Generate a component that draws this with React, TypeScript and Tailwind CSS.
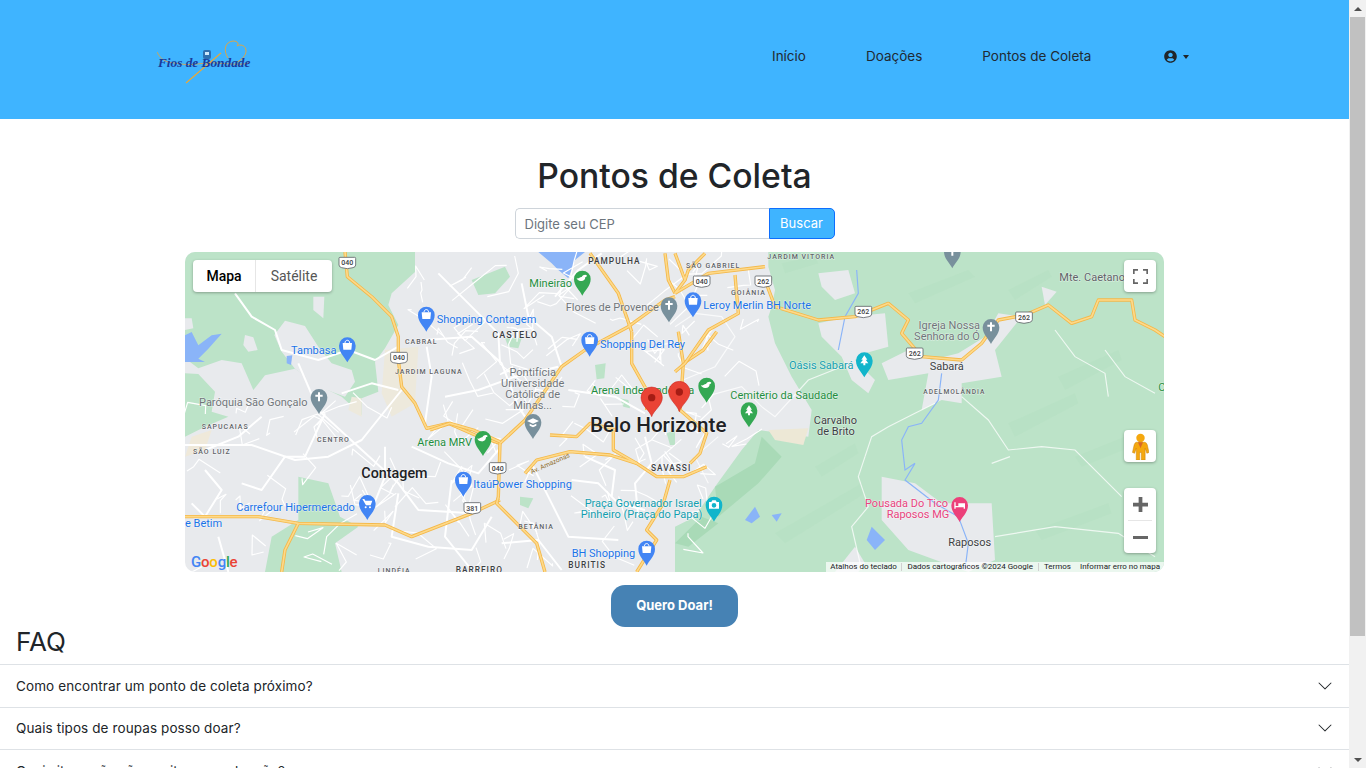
import { FaUserCircle } from "react-icons/fa";

// Map drawing is authored in 3x units: the left half runs x 0-1470, the right half is shifted by 1470
const GREEN = "#bce3c8";
const DARK_GREEN = "#a9dab7";
const URBAN = "#e8eaed";

const LEFT_GREENS = [
  "0,6 690,6 690,66 620,130 610,165 640,225 600,295 570,335 580,425 530,445 530,495 470,440 400,406 330,356 240,376 205,420 170,340 110,330 40,355 0,325",
  "860,90 960,50 975,80 930,130 880,135",
  "0,370 40,372 90,425 80,485 130,500 60,530 0,560",
  "340,680 430,700 465,800 520,830 450,880 470,966 240,966 260,860 340,810",
  "1230,345 1262,340 1258,385 1235,388",
  "1005,740 1045,745 1030,775 1005,765",
  "960,265 1010,265 1000,295 970,290",
  "1305,445 1330,450 1335,475 1315,470",
  "1445,550 1470,540 1470,585 1455,585",
];

// gray cut out of the big green around Tambasa
const LEFT_GRAY = [
  "300,212 360,228 400,290 440,340 500,360 510,395 480,440 400,410 330,356 290,305 268,255",
  "180,255 205,262 218,300 190,305 175,285",
  "385,140 418,140 415,205 385,180",
  "0,205 20,205 25,235 0,240",
];

const RIGHT_GREEN =
  "280,6 1470,6 1470,966 0,966 0,830 60,800 120,710 200,600 250,540 400,560 410,480 350,380 300,280 280,200 290,170 300,120 280,50";

const RIGHT_URBAN = [
  "430,70 520,60 540,130 480,150 440,110",
  "430,220 520,200 630,190 640,290 570,310 540,330 600,390 580,430 530,390 500,320 440,260",
  "620,340 700,300 770,330 850,310 930,260 970,190 1040,200 960,300 980,380 860,400 860,460 800,450 740,480 760,370 640,390",
  "620,680 720,700 800,760 950,760 960,930 880,966 700,900 620,810",
  "480,966 540,890 570,940 550,966",
  "1100,110 1145,125 1110,165",
];

const DEEP_GREEN = ["120,710 240,640 260,560 320,620 250,700 130,800", "0,880 80,800 130,820 40,890"];

// faint relief on the hills
const RELIEF = [
  "700,130 880,60 900,80 720,160",
  "1000,120 1120,60 1130,80 1020,150",
  "1150,380 1330,300 1340,330 1170,420",
  "1000,520 1200,430 1210,460 1020,560",
  "300,850 560,700 570,730 330,880",
  "1080,840 1300,760 1310,790 1100,870",
  "420,650 540,580 550,610 440,680",
  "320,40 420,20 430,40 330,70",
  "1200,620 1400,540 1420,570 1220,650",
];

const WHITE_LEFT = [
  "150,130 200,200 270,240 290,300 400,330 490,300 570,330 640,290",
  "340,340 400,480 520,590 640,700 700,780 860,790",
  "0,585 200,585 330,630 430,620 530,570 650,420",
  "420,490 360,620 300,620 230,720 170,700",
  "470,430 560,400 640,420",
  "725,290 740,380 720,520",
  "720,270 860,260 950,340 1000,470 1020,500",
  "780,440 880,420 990,380 1120,350",
  "600,590 600,680 560,780",
  "680,590 790,640 880,670 940,600",
  "800,690 780,860 860,960",
  "640,730 620,860 730,890 860,900 920,800",
  "1010,100 1030,200 1100,260 1130,350",
  "760,70 850,160 940,250 945,340",
  "1150,420 1290,440 1380,490",
  "1040,640 1100,760 1150,860 1300,870",
  "1160,690 1240,700 1300,760 1380,780",
  "950,880 1060,870 1130,960",
  "60,660 110,720 60,800 20,760",
  "100,860 130,966",
  "1250,10 1180,60 1110,140",
  "1380,560 1400,640 1350,700 1360,800",
  "1200,620 1290,660 1280,740",
  "230,500 160,560 60,600",
];

const WHITE_RIGHT = [
  "0,230 60,190 140,200 180,260 120,350 0,400",
  "90,440 200,410 260,470 300,500 400,390 500,350",
  "130,560 60,620 100,700",
  "570,620 590,560 640,530 720,490 780,460",
  "570,620 550,680 580,770 530,830 560,960",
  "860,440 940,510 1000,600 1100,590 1200,600 1340,740",
  "950,640 1005,620",
  "960,860 1140,830 1330,850 1440,920",
  "1140,240 1200,320 1290,370 1300,440",
  "1290,300 1350,380 1440,430",
];

const YELLOW_LEFT = [
  "480,6 487,80 560,140 620,200 640,260 640,330 650,410 690,460 725,535 790,520 870,555 945,580",
  "945,580 1020,510 1130,350 1200,300 1330,230 1440,150 1470,140",
  "945,750 860,790 680,860 600,825 340,820 220,800 0,800",
  "340,820 300,900 290,966",
  "1215,10 1300,130 1340,245",
  "1440,10 1450,90 1470,130",
];

// central Belo Horizonte, offset by 735,240
const YELLOW_CENTER = [
  "0,300 60,280 130,300 210,335",
  "210,340 205,500 200,520 320,640 345,726",
  "285,430 320,390 420,365 540,375 620,400 680,440 760,440 830,410",
  "720,450 700,520 650,600 680,630 620,726",
  "360,315 440,320 480,280 560,300",
  "550,300 550,360 620,400",
  "605,5 605,100 650,180 650,240",
  "745,5 760,100 750,240 830,310 810,370 780,400",
  "860,5 820,60 760,100",
];

const YELLOW_RIGHT = [
  "0,130 100,70 270,50",
  "180,75 190,190 100,240 30,340 0,365",
  "270,90 300,170 430,210 540,200 640,160 700,210 680,250 740,320 860,330 920,280 970,210 1050,195 1120,165 1190,220 1250,200 1270,150 1370,150 1380,210 1440,240 1470,260",
  "0,10 30,90 0,130",
  "90,10 40,60 30,90",
];

const RIVERS = [
  "545,60 550,130 510,200 490,300",
  "800,370 790,450 740,520 700,530 680,570 690,660 720,640 690,690 780,760 850,800 880,880 870,960",
];

const WATER = [
  "1060,6 1200,6 1170,30 1150,85 1120,60 1100,40",
  "0,256 20,246 40,286 80,256 110,251 70,296 40,326 60,336 0,336",
  "305,318 322,316 318,345 305,340",
];
const WATER_RIGHT = ["210,810 240,770 255,800 230,820", "290,795 320,790 305,815", "590,830 630,870 600,900 575,870"];

// seeded side streets for the built-up part of the city
function buildStreets(count: number, seed: number, x0: number, x1: number, y0: number, y1: number) {
  let n = seed;
  const next = () => {
    n = (n * 16807) % 2147483647;
    return n / 2147483647;
  };
  const out: string[] = [];
  for (let i = 0; i < count; i++) {
    let x = x0 + next() * (x1 - x0);
    let y = y0 + next() * (y1 - y0);
    const pts = [`${Math.round(x)},${Math.round(y)}`];
    for (let j = 0; j < 3; j++) {
      x += (next() - 0.5) * 130;
      y += (next() - 0.5) * 120;
      if (x > 1760 - Math.max(0, y - 400) * 0.35) break;
      pts.push(`${Math.round(x)},${Math.round(y)}`);
    }
    if (pts.length > 1) out.push(pts.join(" "));
  }
  return out;
}

const STREETS = [...buildStreets(110, 4711, 640, 1800, 20, 960), ...buildStreets(30, 90210, 0, 640, 440, 960)];

type Label = { t: string; x: number; y: number; s?: number; c: string; w?: number; ls?: number; a?: "middle" };

const BLUE = "#1a73e8";
const MGREEN = "#1e8e3e";
const GRAY = "#70757a";
const INK = "#3c4043";
const TEAL = "#129eaf";

const LEFT_LABELS: Label[] = [
  { t: "Shopping Contagem", x: 755, y: 219, c: BLUE },
  { t: "CASTELO", x: 922, y: 263, s: 27, c: INK, w: 500, ls: 3 },
  { t: "CABRAL", x: 660, y: 281, s: 21, c: "#5f6368", w: 500, ls: 3 },
  { t: "Tambasa", x: 318, y: 313, c: BLUE },
  { t: "JARDIM LAGUNA", x: 630, y: 373, s: 21, c: "#5f6368", w: 500, ls: 3 },
  { t: "Paróquia São Gonçalo", x: 42, y: 467, c: GRAY },
  { t: "Pontifícia", x: 1043, y: 377, c: GRAY, a: "middle" },
  { t: "Universidade", x: 1043, y: 411, c: GRAY, a: "middle" },
  { t: "Católica de", x: 1043, y: 444, c: GRAY, a: "middle" },
  { t: "Minas...", x: 1043, y: 478, c: GRAY, a: "middle" },
  { t: "SAPUCAIAS", x: 50, y: 536, s: 21, c: "#5f6368", w: 500, ls: 3 },
  { t: "CENTRO", x: 396, y: 577, s: 21, c: "#5f6368", w: 500, ls: 3 },
  { t: "SÃO LUIZ", x: 24, y: 611, s: 21, c: "#5f6368", w: 500, ls: 3 },
  { t: "Arena MRV", x: 697, y: 589, c: MGREEN },
  { t: "Contagem", x: 529, y: 685, s: 43, c: "#202124", w: 500 },
  { t: "ItaúPower Shopping", x: 865, y: 714, c: BLUE },
  { t: "Carrefour Hipermercado", x: 154, y: 783, c: BLUE },
  { t: "e Betim", x: 0, y: 830, c: BLUE },
  { t: "BETÂNIA", x: 1000, y: 838, s: 21, c: "#5f6368", w: 500, ls: 3 },
  { t: "Praça Governador Israel", x: 1199, y: 771, c: TEAL },
  { t: "Pinheiro (Praça do Papa)", x: 1187, y: 805, c: TEAL },
  { t: "BH Shopping", x: 1160, y: 921, c: BLUE },
  { t: "BURITIS", x: 1150, y: 955, s: 25, c: INK, w: 500, ls: 3 },
  { t: "BARREIRO", x: 812, y: 968, s: 25, c: INK, w: 500, ls: 3 },
  { t: "LINDÉIA", x: 578, y: 970, s: 21, c: "#5f6368", w: 500, ls: 3 },
  { t: "PAMPULHA", x: 1210, y: 41, s: 25, c: INK, w: 500, ls: 3 },
  { t: "Mineirão", x: 1033, y: 110, c: MGREEN },
  { t: "Flores de Provence", x: 1142, y: 183, c: GRAY },
  { t: "Shopping Del Rey", x: 1245, y: 294, c: BLUE },
  { t: "Arena Independência", x: 1218, y: 431, c: MGREEN },
  { t: "Belo Horizonte", x: 1215, y: 546, s: 62, c: "#202124", w: 500 },
  { t: "SAVASSI", x: 1398, y: 664, s: 25, c: INK, w: 500, ls: 3 },
];

const RIGHT_LABELS: Label[] = [
  { t: "SÃO GABRIEL", x: 33, y: 55, s: 21, c: "#5f6368", w: 500, ls: 3 },
  { t: "JARDIM VITORIA", x: 277, y: 28, s: 21, c: "#5f6368", w: 500, ls: 3 },
  { t: "GOIÂNIA", x: 168, y: 136, s: 21, c: "#5f6368", w: 500, ls: 3 },
  { t: "Leroy Merlin BH Norte", x: 85, y: 176, c: BLUE },
  { t: "Oásis Sabará", x: 342, y: 356, c: TEAL },
  { t: "Igreja Nossa", x: 823, y: 236, c: GRAY, a: "middle" },
  { t: "Senhora do Ó", x: 816, y: 269, c: GRAY, a: "middle" },
  { t: "Mte. Caetano", x: 1153, y: 94, c: "#5f6368" },
  { t: "Sabará", x: 764, y: 359, c: INK },
  { t: "ADELMOLÂNDIA", x: 745, y: 432, s: 20, c: "#5f6368", w: 500, ls: 3 },
  { t: "Cemitério da Saudade", x: 166, y: 447, c: MGREEN },
  { t: "Carvalho", x: 481, y: 521, c: INK, a: "middle" },
  { t: "de Brito", x: 483, y: 555, c: INK, a: "middle" },
  { t: "Pousada Do Tico", x: 570, y: 770, c: "#e8437e" },
  { t: "Raposos MG", x: 635, y: 803, c: "#e8437e" },
  { t: "Raposos", x: 820, y: 889, c: INK },
  { t: "C", x: 1450, y: 422, c: MGREEN },
];

const POI_BLUE = "#4285f4";
const POI_GREEN = "#34a853";
const POI_GRAY = "#78909c";
const POI_TEAL = "#12b5cb";
const POI_PINK = "#ec407a";

type Poi = { x: number; y: number; c: string; g: "bag" | "park" | "cross" | "grad" | "tree" | "photo" | "bed" | "cart" };

const POIS: Poi[] = [
  { x: 724, y: 195, c: POI_BLUE, g: "bag" },
  { x: 487, y: 287, c: POI_BLUE, g: "bag" },
  { x: 1214, y: 270, c: POI_BLUE, g: "bag" },
  { x: 835, y: 690, c: POI_BLUE, g: "bag" },
  { x: 547, y: 760, c: POI_BLUE, g: "cart" },
  { x: 1385, y: 897, c: POI_BLUE, g: "bag" },
  { x: 1524, y: 152, c: POI_BLUE, g: "bag" },
  { x: 1192, y: 87, c: POI_GREEN, g: "park" },
  { x: 894, y: 568, c: POI_GREEN, g: "park" },
  { x: 1565, y: 408, c: POI_GREEN, g: "park" },
  { x: 1692, y: 482, c: POI_GREEN, g: "tree" },
  { x: 402, y: 442, c: POI_GRAY, g: "cross" },
  { x: 1452, y: 167, c: POI_GRAY, g: "cross" },
  { x: 1044, y: 517, c: POI_GRAY, g: "grad" },
  { x: 2418, y: 232, c: POI_GRAY, g: "cross" },
  { x: 2302, y: 5, c: POI_GRAY, g: "cross" },
  { x: 2038, y: 332, c: POI_TEAL, g: "tree" },
  { x: 1587, y: 765, c: POI_TEAL, g: "photo" },
  { x: 2324, y: 766, c: POI_PINK, g: "bed" },
];

const SHIELDS = [
  { x: 487, y: 38, t: "040" },
  { x: 642, y: 323, t: "040" },
  { x: 938, y: 654, t: "040" },
  { x: 862, y: 774, t: "381" },
  { x: 1550, y: 94, t: "040" },
  { x: 1735, y: 94, t: "262" },
  { x: 2035, y: 185, t: "262" },
  { x: 2189, y: 310, t: "262" },
  { x: 2517, y: 202, t: "262" },
];

function PoiGlyph({ g }: { g: Poi["g"] }) {
  if (g === "cross") return <path d="M-3-15h6v7h8v6H3v14h-6V-2h-8v-6h8z" fill="#fff" />;
  if (g === "bag")
    return (
      <g fill="#fff">
        <path d="M-14-8h28l-2 20h-24z" />
        <path d="M-7-8c0-11 14-11 14 0" fill="none" stroke="#fff" strokeWidth="3" />
      </g>
    );
  if (g === "cart")
    return <path d="M-15-13h6l3 5h21l-5 14H-4zM-5 9a3 3 0 1 1 0 6 3 3 0 0 1 0-6zM8 9a3 3 0 1 1 0 6 3 3 0 0 1 0-6z" fill="#fff" />;
  if (g === "park") return <path d="M-17-3c5 4 10-4 15-3 4-8 13-9 16-4-1 3-3 3-5 4 0 8-6 13-14 12-6 0-11-4-12-9z" fill="#fff" />;
  if (g === "grad") return <path d="M0-12l18 8L0 4l-18-8zM-10 4l10 5 10-5v6l-10 5-10-5z" fill="#fff" />;
  if (g === "tree") return <path d="M0-16l9 13H4l8 11H3v6h-6V8h-9l8-11h-5z" fill="#fff" />;
  if (g === "photo") return <path d="M-15-9h7l3-5h10l3 5h7v20h-30zM0-6a7 7 0 1 0 0 14A7 7 0 0 0 0-6z" fill="#fff" />;
  return <path d="M-16-9h4V2h8v-8h20v16h-4V6h-24v4h-4z" fill="#fff" />;
}

function MapText({ l }: { l: Label }) {
  return (
    <text
      x={l.x}
      y={l.y}
      fontSize={l.s ?? 33}
      fontWeight={l.w ?? 400}
      letterSpacing={l.ls ?? 0}
      textAnchor={l.a ?? "start"}
      fill={l.c}
      stroke="#ffffff"
      strokeOpacity="0.55"
      strokeWidth="3"
      paintOrder="stroke"
    >
      {l.t}
    </text>
  );
}

function YellowRoads({ roads, w = 10 }: { roads: string[]; w?: number }) {
  return (
    <>
      {roads.map((p) => (
        <polyline key={p} points={p} fill="none" stroke="#f4b849" strokeWidth={w} strokeLinejoin="round" />
      ))}
      {roads.map((p) => (
        <polyline key={`in-${p}`} points={p} fill="none" stroke="#fdd98a" strokeWidth={w - 5} strokeLinejoin="round" />
      ))}
    </>
  );
}

function MapDrawing() {
  return (
    <svg viewBox="0 6 2937 960" className="block h-[320px] w-[979px]" style={{ fontFamily: "Roboto, sans-serif" }}>
      <rect x="0" y="0" width="2937" height="970" fill={URBAN} />
      {LEFT_GREENS.map((p) => (
        <polygon key={p} points={p} fill={GREEN} />
      ))}
      {LEFT_GRAY.map((p) => (
        <polygon key={p} points={p} fill={URBAN} />
      ))}
      <polygon points="600,300 700,290 690,460 620,500 590,430" fill="#ede9dc" />
      <polygon points="20,560 80,540 60,600 0,620" fill="#efe9da" />
      <polygon points="500,440 530,445 530,500 490,480" fill="#ede9dc" />
      <g transform="translate(1470 0)">
        <polygon points={RIGHT_GREEN} fill={GREEN} />
        {RELIEF.map((p) => (
          <polygon key={p} points={p} fill={DARK_GREEN} fillOpacity="0.2" />
        ))}
        {RIGHT_URBAN.map((p) => (
          <polygon key={p} points={p} fill={URBAN} />
        ))}
        {DEEP_GREEN.map((p) => (
          <polygon key={p} points={p} fill={DARK_GREEN} />
        ))}
        <polygon points="280,540 400,535 385,585 300,570" fill="#ede8d6" />
        {WATER_RIGHT.map((p) => (
          <polygon key={p} points={p} fill="#8ab4f8" />
        ))}
        {RIVERS.map((p) => (
          <polyline key={p} points={p} fill="none" stroke="#8ab4f8" strokeWidth="3.500" />
        ))}
        {WHITE_RIGHT.map((p) => (
          <polyline key={p} points={p} fill="none" stroke="#fff" strokeWidth="3.500" strokeOpacity="0.75" />
        ))}
      </g>
      {WATER.map((p) => (
        <polygon key={p} points={p} fill="#8ab4f8" />
      ))}
      {STREETS.map((p) => (
        <polyline key={p} points={p} fill="none" stroke="#fff" strokeWidth="3.500" strokeLinejoin="round" />
      ))}
      {WHITE_LEFT.map((p) => (
        <polyline key={p} points={p} fill="none" stroke="#fff" strokeWidth="6" strokeLinejoin="round" />
      ))}
      <YellowRoads roads={YELLOW_LEFT} />
      <g transform="translate(735 240)">
        <YellowRoads roads={YELLOW_CENTER} />
      </g>
      <g transform="translate(1470 0)">
        <YellowRoads roads={YELLOW_RIGHT} />
      </g>

      {SHIELDS.map((s) => (
        <g key={s.x + s.t}>
          <path
            d={`M${s.x - 22} ${s.y - 16}h44q3 0 3 3v20q0 6-8 8l-17 3-17-3q-8-2-8-8v-20q0-3 3-3z`}
            fill="#fff"
            stroke="#5f6368"
            strokeWidth="2.5"
          />
          <text x={s.x} y={s.y + 8} textAnchor="middle" fontSize="21" fontWeight="500" fill="#3c4043">
            {s.t}
          </text>
        </g>
      ))}

      {LEFT_LABELS.map((l) => (
        <MapText key={l.t} l={l} />
      ))}
      <g transform="translate(1470 0)">
        {RIGHT_LABELS.map((l) => (
          <MapText key={l.t} l={l} />
        ))}
      </g>

      <g fontSize="20" fill="#8d6b1f" transform="translate(1040 672) rotate(-24)">
        <text>Av. Amazonas</text>
      </g>

      {POIS.map((p) => (
        <g key={`${p.x}-${p.y}`} transform={`translate(${p.x} ${p.y})`}>
          <path d="M0 50C-6 36-25 22-25 0a25 25 0 0 1 50 0C25 22 6 36 0 50z" fill={p.c} />
          <PoiGlyph g={p.g} />
        </g>
      ))}

      {/* red markers */}
      <g transform="translate(1400 443)">
        <path d="M0 57C-6 38-32 23-32 0a32 32 0 0 1 64 0C32 23 6 38 0 57z" fill="#ea4335" stroke="#c5221f" strokeWidth="1.5" />
        <circle r="11" fill="#a51c14" />
      </g>
      <g transform="translate(1483 426)">
        <path d="M0 59C-6 39-32 23-32 0a32 32 0 0 1 64 0C32 23 6 39 0 59z" fill="#ea4335" stroke="#c5221f" strokeWidth="1.5" />
        <circle r="11" fill="#a51c14" />
      </g>
    </svg>
  );
}

function Pegman() {
  return (
    <svg viewBox="0 0 20 32" className="h-[27px] w-[17px]">
      <circle cx="10" cy="6" r="5" fill="#f5a80f" />
      <path
        d="M5 11h10q2 0 3 3l2 9-2.5 1-2-6V32h-4.5v-9h-2v9H5V18l-2 6-2.500-1 2-9q1-3 2.500-3z"
        fill="#f5a80f"
        stroke="#c9820a"
        strokeWidth="0.6"
      />
      <path d="M7 11h6l-3 7z" fill="#d9692a" />
    </svg>
  );
}

function FullscreenIcon() {
  return (
    <svg viewBox="0 0 18 18" className="h-[15px] w-[15px]" fill="#666">
      <path d="M0 0v6h2V2h4V0zM12 0v2h4v4h2V0zM0 12v6h6v-2H2v-4zM16 12v4h-4v2h6v-6z" />
    </svg>
  );
}

function ChevronIcon() {
  return (
    <svg viewBox="0 0 16 16" className="h-4 w-4" fill="#212529">
      <path
        fillRule="evenodd"
        d="M1.646 4.646a.5.5 0 0 1 .708 0L8 10.293l5.646-5.647a.5.5 0 0 1 .708.708l-6 6a.5.5 0 0 1-.708 0l-6-6a.5.5 0 0 1 0-.708z"
      />
    </svg>
  );
}

function Logo() {
  return (
    <svg viewBox="0 0 100 46" className="h-[46px] w-[100px] translate-y-[3px]">
      {/* needle */}
      <path d="M29 43L64 13" stroke="#f0a830" strokeWidth="1.1" />
      <path d="M0 12C6 24 14 22 24 24s24-2 36-1 26 2 32 0" stroke="#eda332" strokeWidth="0.8" fill="none" />
      {/* heart thread */}
      <path d="M71 18C66 10 68 2 76 1c5 0 6 3 4 5 3-2 9-1 9 5 0 4-4 9-9 11" stroke="#eda332" strokeWidth="0.9" fill="none" />
      <rect x="46" y="10" width="8" height="9" rx="2" fill="#2f6fb0" />
      <rect x="48" y="12" width="4" height="3" fill="#cfe7fb" />
      <text
        x="1"
        y="27"
        fontSize="13.300"
        fontStyle="italic"
        fontWeight="700"
        fill="#1a3a9a"
        style={{ fontFamily: '"Liberation Serif", serif' }}
      >
        Fios de Bondade
      </text>
    </svg>
  );
}

function AccordionRow({ text }: { text: string }) {
  return (
    <div className="flex h-[42.500px] items-center justify-between border-t border-[#dee2e6] pl-4 pr-4">
      <span className="text-[13.500px] tracking-[0.1px] text-[#212529]">{text}</span>
      <ChevronIcon />
    </div>
  );
}

function Scrollbar() {
  return (
    <aside className="flex h-screen w-[17px] shrink-0 flex-col items-center bg-[#f1f1f1]">
      <div className="flex h-[17px] w-full items-center justify-center">
        <div className="h-0 w-0 border-x-4 border-b-4 border-x-transparent border-b-[#505050]" />
      </div>
      <div className="h-[619px] w-[15px] bg-[#c1c1c1]" />
      <div className="mt-auto flex h-[17px] w-full items-center justify-center">
        <div className="h-0 w-0 border-x-4 border-t-4 border-x-transparent border-t-[#505050]" />
      </div>
    </aside>
  );
}

export default function App() {
  return (
    <div className="flex h-screen overflow-hidden bg-white font-['Inter',sans-serif] text-[#212529]">
      <main className="w-[1349px] shrink-0">
        <header className="flex h-[119px] items-center bg-[#3fb4ff] pl-[157px]">
          <Logo />
          <nav className="ml-[515px] flex -translate-y-[3px] items-center gap-[60px] text-[13.500px] text-[#1f2a33]">
            <a>Início</a>
            <a>Doações</a>
            <a>Pontos de Coleta</a>
            <a className="ml-[13px] flex items-center gap-[6px]">
              <FaUserCircle className="h-[13px] w-[13px] text-[#212529]" />
              <span className="h-0 w-0 border-x-[3.500px] border-t-[4px] border-x-transparent border-t-[#212529]" />
            </a>
          </nav>
        </header>

        <section className="flex flex-col items-center">
          <h1 className="mt-[36px] text-[33.700px] font-medium leading-[41px]">Pontos de Coleta</h1>
          <form className="mt-[12px] flex h-[31px] w-[320px]">
            <input
              placeholder="Digite seu CEP"
              className="h-full min-w-0 flex-1 rounded-l-[5px] border border-r-0 border-[#ced4da] bg-white px-[9px] text-[13px] placeholder:text-[#6c757d]"
            />
            <button
              type="button"
              className="h-full w-[66px] rounded-r-[5px] border border-[#0d6efd] bg-[#3fb4ff] text-[13px] text-white"
            >
              Buscar
            </button>
          </form>

          <div className="relative mt-[13px] h-[320px] w-[979px] overflow-hidden rounded-[10px]">
            <MapDrawing />

            <div className="absolute left-2 top-2 flex h-8 overflow-hidden rounded-sm bg-white font-['Roboto',sans-serif] text-[14px] shadow-[0_1px_3px_rgba(0,0,0,0.3)]">
              <span className="flex w-[63px] items-center justify-center border-r border-[#e6e6e6] font-medium text-black">
                Mapa
              </span>
              <span className="flex w-[76px] items-center justify-center text-[#565656]">Satélite</span>
            </div>

            <div className="absolute right-2 top-2 flex h-8 w-8 items-center justify-center rounded-sm bg-white shadow-[0_1px_3px_rgba(0,0,0,0.3)]">
              <FullscreenIcon />
            </div>

            <div className="absolute right-2 top-[178px] flex h-8 w-8 items-center justify-center rounded-sm bg-white shadow-[0_1px_3px_rgba(0,0,0,0.3)]">
              <Pegman />
            </div>

            <div className="absolute right-2 top-[236px] flex w-8 flex-col items-center rounded-sm bg-white text-[#666] shadow-[0_1px_3px_rgba(0,0,0,0.3)]">
              <div className="flex h-8 w-full items-center justify-center">
                <svg viewBox="0 0 16 16" className="h-[15px] w-[15px]" fill="#666">
                  <path d="M6 0h4v6h6v4h-6v6H6v-6H0V6h6z" />
                </svg>
              </div>
              <div className="h-px w-6 bg-[#e6e6e6]" />
              <div className="flex h-8 w-full items-center justify-center">
                <div className="h-[3px] w-[15px] bg-[#666]" />
              </div>
            </div>

            <div className="absolute bottom-[1px] left-[6px] font-['Roboto',sans-serif] text-[15px] font-medium leading-[18px] tracking-[-0.2px]">
              <span className="text-[#4285f4]">G</span>
              <span className="text-[#ea4335]">o</span>
              <span className="text-[#fbbc05]">o</span>
              <span className="text-[#4285f4]">g</span>
              <span className="text-[#34a853]">l</span>
              <span className="text-[#ea4335]">e</span>
            </div>

            <div className="absolute bottom-0 right-0 flex h-[10px] items-center bg-white/70 pr-[4px] font-['Roboto',sans-serif] text-[8px] leading-none text-[#202124]">
              <span className="border-r border-[#d0d0d0] px-[4.500px]">Atalhos do teclado</span>
              <span className="border-r border-[#d0d0d0] px-[5px]">Dados cartográficos ©2024 Google</span>
              <span className="px-[5px]">Termos</span>
              <span className="pl-1">Informar erro no mapa</span>
            </div>
          </div>

          <button
            type="button"
            className="mt-[13px] h-[42px] w-[127px] rounded-[14px] bg-[#4682b4] text-[13px] font-bold text-white"
          >
            Quero Doar!
          </button>
        </section>

        <h2 className="pb-[7px] pl-4 text-[26px] font-normal leading-[30px]">FAQ</h2>
        <div>
          <AccordionRow text="Como encontrar um ponto de coleta próximo?" />
          <AccordionRow text="Quais tipos de roupas posso doar?" />
          <AccordionRow text="Quais itens não são aceitos para doação?" />
        </div>
      </main>
      <Scrollbar />
    </div>
  );
}
